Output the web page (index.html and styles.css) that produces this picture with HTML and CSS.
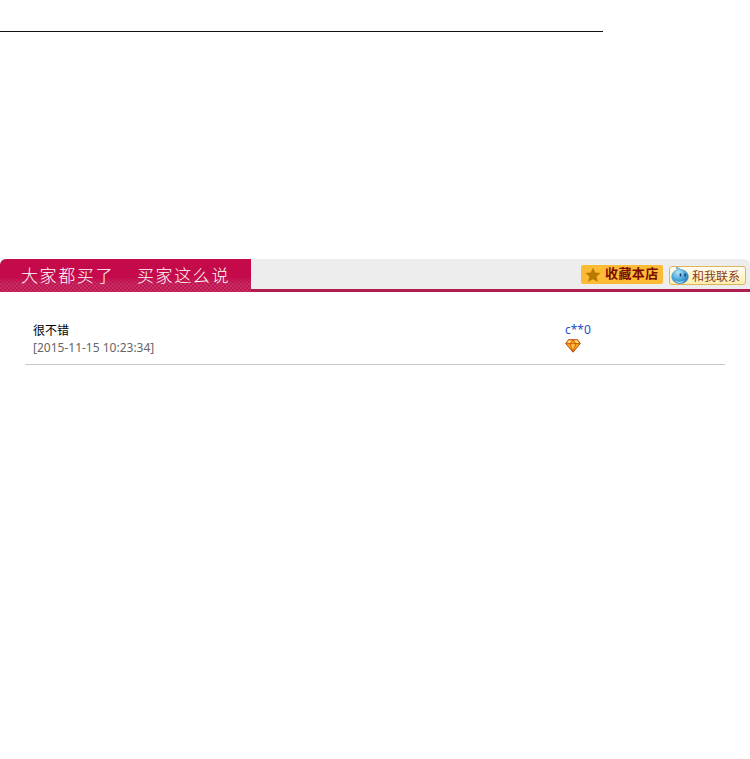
FILE: index.html
```
<!DOCTYPE html>
<html lang="zh-CN">
<head>
    <meta charset="UTF-8">
    <meta name="viewport" content="width=device-width, initial-scale=1.0">
    <title>买家评价</title>
    <link rel="stylesheet" href="styles.css">
</head>
<body>
    <hr class="divider">
    <div class="header">
        <h2 class="header-title"><span>大家都买了</span><span>买家这么说</span></h2>
        <div class="header-actions">
            <a class="btn-collect">
                <svg width="16" height="16" viewBox="0 0 16 16">
                    <path d="M8 .8l2.300 4.600 5.200.7-3.900 3.500 1.200 5.200L8 12.300l-4.800 2.500 1.200-5.200L.5 6.100l5.200-.7z" fill="#b97800"/>
                </svg>
                <span>收藏本店</span>
            </a>
            <a class="btn-contact">
                <svg width="18" height="18" viewBox="0 0 18 18">
                    <defs>
                        <radialGradient id="drop" cx="38%" cy="30%" r="75%">
                            <stop offset="0" stop-color="#b8e4f8"/>
                            <stop offset=".5" stop-color="#59b2e3"/>
                            <stop offset="1" stop-color="#2277b8"/>
                        </radialGradient>
                    </defs>
                    <path d="M5 .5c2.500 0 3.600.8 4.700 2C14 2.800 17.300 5.700 17.300 9.600c0 4-3.400 7-8.200 7s-8.300-3-8.300-7c0-3.200 2-5.600 5-6.500C6.500 2.300 6 1.200 5 .5z" fill="url(#drop)" stroke="#3a86bd" stroke-width=".6"/>
                    <path d="M3.500 13.300c3 1.800 7.500 1.800 10.500-.2-1.500 2-3.200 2.900-5.200 2.900s-4-1-5.300-2.700z" fill="#a5def5"/>
                    <path d="M9.500 6.500v3M14 6.500v3" stroke="#153c68" stroke-width="1.500"/>
                </svg>
                <span>和我联系</span>
            </a>
        </div>
    </div>
    <div class="review-list">
        <div class="review">
            <div class="review-content">
                <p class="review-text">很不错</p>
                <p class="review-date">[2015-11-15 10:23:34]</p>
            </div>
            <div class="review-user">
                <a class="user-name">c**0</a>
                <svg class="user-rank" width="16" height="14" viewBox="0 0 16 14">
                    <path d="M3.500.700h9L15.300 4.500 8 13.200.700 4.500z" fill="#f9a51c" stroke="#b94a08"/>
                    <path d="M4 1.500h3L5 4.200H2zM9 1.500h3l2 2.700h-3z" fill="#ffe27a"/>
                    <path d="M5.500 5.200h5L8 11z" fill="#ffc83c"/>
                    <path d="M1 4.600h14M5 4.600L8 1l3 3.600M5 4.600L8 12.500l3-7.900" fill="none" stroke="#c6500b" stroke-width=".8"/>
                </svg>
            </div>
        </div>
    </div>
</body>
</html>
```
FILE: styles.css
```
* { box-sizing: border-box; }
body {
    margin: 0;
    padding-top: 31px;
    background: #fff;
    font-family: "Noto Sans", "Noto Sans CJK SC", sans-serif;
    font-size: 12px;
}
.divider {
    width: 603px;
    height: 1px;
    margin: 0 0 227px;
    border: none;
    background: #111;
}
.header {
    display: flex;
    justify-content: space-between;
    height: 33px;
    background: #ededed;
    border-bottom: 3px solid #b01c50;
    border-radius: 6px 6px 0 0;
}
.header-title {
    display: flex;
    gap: 23px;
    width: 251px;
    height: 33px;
    margin: 0;
    padding-left: 21px;
    border-radius: 6px 0 0 0;
    background:
        linear-gradient(rgba(196,10,74,1) 55%, rgba(196,10,74,0.3) 75%),
        repeating-conic-gradient(#b91e56 0 25%, #cf3c70 0 50%) 0 0 / 4px 4px;
    color: #fff;
    font-family: "Noto Sans CJK SC", sans-serif;
    font-size: 17px;
    font-weight: 300;
    line-height: 31px;
    letter-spacing: 1.600px;
    white-space: nowrap;
}
.header-actions {
    display: flex;
    gap: 6px;
    padding: 6px 4px 0 0;
}
.btn-collect {
    display: flex;
    align-items: center;
    gap: 4px;
    width: 82px;
    height: 19px;
    padding-left: 4px;
    background: #fcba35;
    border-radius: 2px;
    color: #7a0c00;
    font-size: 13px;
    font-weight: bold;
    line-height: 17px;
    letter-spacing: 0.400px;
    white-space: nowrap;
}
.btn-collect span { padding-bottom: 2px; }
.btn-contact {
    display: flex;
    align-items: center;
    gap: 3px;
    width: 77px;
    height: 19px;
    margin-top: 1px;
    padding-left: 1px;
    background: linear-gradient(#fffdf4, #ffefac);
    border: 1px solid #dfb45c;
    border-radius: 3px;
    color: #8a3a1c;
    font-size: 12px;
    white-space: nowrap;
}
.btn-collect svg, .btn-contact svg { flex-shrink: 0; }
.review-list { padding: 29px 25px 0; }
.review {
    display: flex;
    height: 44px;
    padding-left: 8px;
    border-bottom: 1px solid #c8c8c8;
}
.review-content { width: 532px; }
.review p { margin: 0; line-height: 18px; }
.review .review-text { padding-top: 1px; line-height: 17px; color: #000; }
.review-date { color: #666; }
.user-name {
    display: block;
    color: #1f4fc0;
    line-height: 18px;
}
.user-rank { display: block; }
```
